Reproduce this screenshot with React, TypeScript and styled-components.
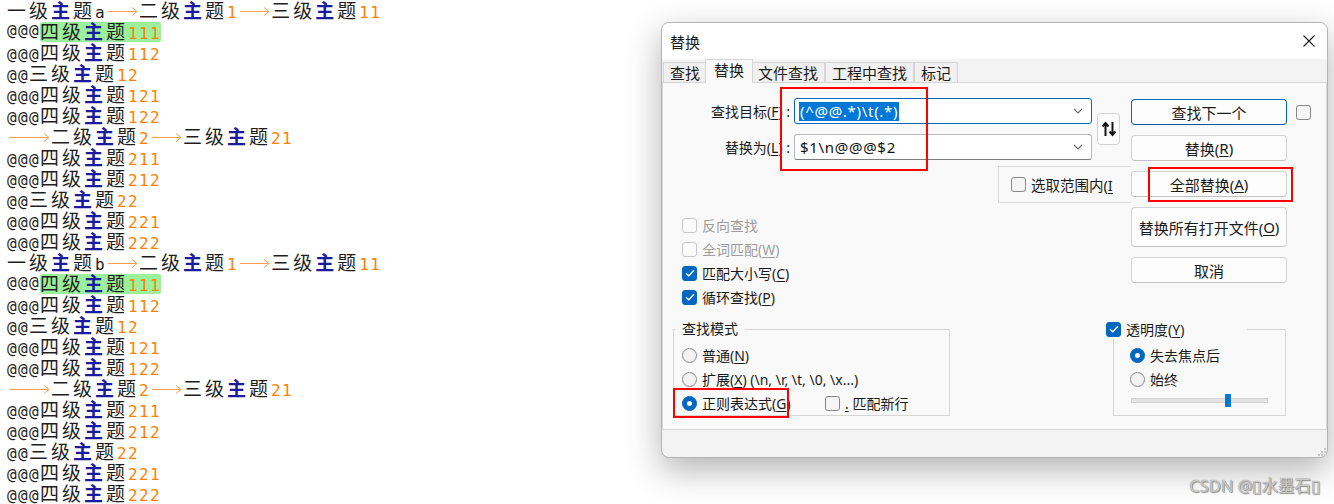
import React from "react";
import styled, { createGlobalStyle } from "styled-components";

const GlobalStyle = createGlobalStyle`
  html, body {
    margin: 0;
    padding: 0;
    background: #ffffff;
  }
  body {
    width: 1334px;
    height: 504px;
    overflow: hidden;
  }
`;

const UI_FONT = `"Noto Sans", "Noto Sans CJK SC", sans-serif`;

const Page = styled.div`
  position: relative;
  width: 1334px;
  height: 504px;
  overflow: hidden;
  background: #ffffff;
`;

/* ---------- editor ---------- */

type Kind = "cjk" | "key" | "num" | "sym";

const Editor = styled.div`
  padding: 0 0 0 7px;
`;

const Line = styled.div`
  height: 21px;
  line-height: 19px;
  white-space: pre;
`;

const Tok = styled.span<{ $kind: Kind }>`
  font-family: ${({ $kind }) =>
    $kind === "cjk" || $kind === "key"
      ? `"Noto Sans CJK SC", sans-serif`
      : `"DejaVu Sans Mono", monospace`};
  font-size: ${({ $kind }) => ($kind === "cjk" || $kind === "key" ? "19px" : "16px")};
  letter-spacing: ${({ $kind }) => ($kind === "cjk" || $kind === "key" ? "3px" : "1.37px")};
  font-weight: ${({ $kind }) => ($kind === "key" ? 700 : 400)};
  color: ${({ $kind }) =>
    $kind === "key" ? "#1b1b9e" : $kind === "num" ? "#ff8000" : "#1e1e1e"};
`;

const Mark = styled.span`
  display: inline-block;
  vertical-align: top;
  height: 20px;
  margin-top: 1px;
  line-height: 18px;
  background: #9cf09c;
  border-radius: 2px;
`;

const Tab = styled.span<{ $cols: number }>`
  display: inline-block;
  vertical-align: top;
  width: ${({ $cols }) => $cols * 11}px;
  height: 21px;
  svg {
    display: block;
  }
`;

const TabArrow = ({ w }: { w: number }) => (
  <svg width={w} height={21} viewBox={`0 0 ${w} 21`}>
    <g stroke="#ff9d4d" strokeWidth="1" fill="none">
      <line x1={2} y1={11.5} x2={w - 2} y2={11.5} shapeRendering="crispEdges" />
      <polyline points={`${w - 7},7.5 ${w - 2},11.5 ${w - 7},15.5`} />
    </g>
  </svg>
);

const kindOf = (ch: string): Kind =>
  ch === "主" ? "key" : /[0-9]/.test(ch) ? "num" : /[\u4e00-\u9fff]/.test(ch) ? "cjk" : "sym";

const renderLine = (src: string) => {
  const out: React.ReactNode[] = [];
  let hl: React.ReactNode[] | null = null;
  let col = 0;
  let buf = "";
  let kind: Kind | null = null;
  let key = 0;
  const target = () => hl ?? out;
  const flush = () => {
    if (buf && kind) target().push(<Tok key={key++} $kind={kind}>{buf}</Tok>);
    buf = "";
    kind = null;
  };
  for (const ch of src) {
    if (ch === "[") {
      flush();
      hl = [];
      continue;
    }
    if (ch === "]") {
      flush();
      out.push(<Mark key={key++}>{hl}</Mark>);
      hl = null;
      continue;
    }
    if (ch === "\t") {
      flush();
      const n = 4 - (col % 4);
      target().push(
        <Tab key={key++} $cols={n}>
          <TabArrow w={n * 11} />
        </Tab>
      );
      col += n;
      continue;
    }
    const k = kindOf(ch);
    if (k !== kind) flush();
    kind = k;
    buf += ch;
    col += k === "cjk" || k === "key" ? 2 : 1;
  }
  flush();
  return out;
};

const BLOCK = [
  "@@@[四级主题111]",
  "@@@四级主题112",
  "@@三级主题12",
  "@@@四级主题121",
  "@@@四级主题122",
  "\t二级主题2\t三级主题21",
  "@@@四级主题211",
  "@@@四级主题212",
  "@@三级主题22",
  "@@@四级主题221",
  "@@@四级主题222",
];

const LINES = [
  "一级主题a\t二级主题1\t三级主题11",
  ...BLOCK,
  "一级主题b\t二级主题1\t三级主题11",
  ...BLOCK,
];

/* ---------- dialog ---------- */

const Dialog = styled.div`
  position: absolute;
  left: 661px;
  top: 22px;
  width: 667px;
  height: 436px;
  box-sizing: border-box;
  border: 1px solid #b4b4b4;
  border-radius: 8px;
  background: #f3f3f3;
  box-shadow: 0 12px 34px rgba(0, 0, 0, 0.3);
  display: flex;
  flex-direction: column;
  overflow: hidden;
  font-family: ${UI_FONT};
  font-size: 14px;
  color: #1a1a1a;
`;

const TitleBar = styled.div`
  height: 36px;
  flex: 0 0 36px;
  background: #ffffff;
  display: flex;
  align-items: center;
  justify-content: space-between;
  padding-left: 8px;
`;

const Title = styled.span`
  font-size: 15px;
`;

const CloseButton = styled.div`
  width: 36px;
  height: 36px;
  display: flex;
  align-items: center;
  justify-content: center;
`;

const TabStrip = styled.div`
  height: 23px;
  flex: 0 0 23px;
  display: flex;
  align-items: flex-end;
  padding-left: 1px;
`;

const TabItem = styled.div<{ $active?: boolean }>`
  position: relative;
  box-sizing: border-box;
  height: ${({ $active }) => ($active ? "24px" : "21px")};
  padding: 0 ${({ $active }) => ($active ? "8px" : "6px")};
  margin: 0 ${({ $active }) => ($active ? "-2px" : "0")} -1px 0;
  margin-left: ${({ $active }) => ($active ? "-2px" : "0")};
  border: 1px solid #d6d6d6;
  border-bottom: ${({ $active }) => ($active ? "none" : "1px solid #d6d6d6")};
  background: ${({ $active }) => ($active ? "#f9f9f9" : "#f0f0f0")};
  font-size: 15px;
  line-height: 20px;
  z-index: ${({ $active }) => ($active ? 2 : 1)};
  & + & {
    border-left: ${({ $active }) => ($active ? "1px solid #d6d6d6" : "none")};
  }
`;

const Panel = styled.div`
  flex: 1;
  box-sizing: border-box;
  border: 1px solid #d9d9d9;
  background: #f9f9f9;
  padding-top: 15px;
  display: flex;
  flex-direction: column;
`;

const Footer = styled.div`
  position: relative;
  flex: 0 0 27px;
`;

const Grip = styled.svg`
  position: absolute;
  right: 1px;
  bottom: 1px;
`;

const TopSection = styled.div`
  display: flex;
`;

const LeftCol = styled.div`
  width: 468px;
  display: flex;
  flex-direction: column;
`;

const Fields = styled.div`
  display: flex;
  align-items: center;
`;

const FieldRows = styled.div`
  display: flex;
  flex-direction: column;
  gap: 10px;
`;

const FieldRow = styled.div`
  display: flex;
  align-items: center;
  height: 26px;
`;

const FieldLabel = styled.label`
  width: 131px;
  box-sizing: border-box;
  padding-right: 4px;
  text-align: right;
  white-space: nowrap;
`;

const Combo = styled.div<{ $focused?: boolean }>`
  width: 298px;
  height: 26px;
  box-sizing: border-box;
  border: 1px solid ${({ $focused }) => ($focused ? "#0067c0" : "#b8b8b8")};
  border-bottom-color: ${({ $focused }) => ($focused ? "#0067c0" : "#7c7c7c")};
  border-radius: 3px;
  background: #ffffff;
  display: flex;
  align-items: center;
  justify-content: space-between;
  padding: 0 8px 0 4px;
  font-family: "Noto Sans", sans-serif;
  font-size: 15px;
  letter-spacing: 0.7px;
`;

const ComboText = styled.span<{ $selected?: boolean }>`
  line-height: 19px;
  padding: 0 1px;
  background: ${({ $selected }) => ($selected ? "#0078d7" : "transparent")};
  color: ${({ $selected }) => ($selected ? "#ffffff" : "#111111")};
`;

const SwapButton = styled.div`
  margin-left: 5px;
  width: 23px;
  height: 32px;
  box-sizing: border-box;
  border: 1px solid #d2d2d2;
  border-radius: 4px;
  background: #fdfdfd;
  display: flex;
  align-items: center;
  justify-content: center;
`;

const RangeGroup = styled.div`
  align-self: flex-end;
  width: 133px;
  height: 37px;
  margin-top: 6px;
  box-sizing: border-box;
  border: 1px solid #dadada;
  border-right: none;
  padding-left: 12px;
  display: flex;
  align-items: center;
  gap: 5px;
  white-space: nowrap;
`;

const ClippedLabel = styled.span`
  width: 82px;
  overflow: hidden;
  font-size: 14.5px;
`;

const CheckList = styled.div`
  margin-top: 10px;
  padding-left: 19px;
  display: flex;
  flex-direction: column;
`;

const OptionRow = styled.div<{ $disabled?: boolean }>`
  height: 24px;
  display: flex;
  align-items: center;
  gap: 5px;
  white-space: nowrap;
  color: ${({ $disabled }) => ($disabled ? "#9e9e9e" : "#1a1a1a")};
`;

const ButtonCol = styled.div`
  width: 156px;
  margin-top: 1px;
  display: flex;
  flex-direction: column;
  gap: 10px;
`;

const Button = styled.div<{ $primary?: boolean; $tall?: boolean }>`
  height: ${({ $tall }) => ($tall ? "40px" : "26px")};
  box-sizing: border-box;
  border: 1px solid ${({ $primary }) => ($primary ? "#0067c0" : "#d3d3d3")};
  border-bottom-color: ${({ $primary }) => ($primary ? "#0058a8" : "#c2c2c2")};
  border-radius: 4px;
  background: #fdfdfd;
  display: flex;
  align-items: center;
  justify-content: center;
  font-size: 15px;
  white-space: nowrap;
`;

const SideCheck = styled.div`
  margin: 7px 0 0 9px;
`;

const BottomSection = styled.div`
  display: flex;
  margin-top: 10px;
`;

const Group = styled.fieldset<{ $offset: number; $width: number; $pad: number }>`
  margin: 0 0 0 ${({ $offset }) => $offset}px;
  width: ${({ $width }) => $width}px;
  box-sizing: border-box;
  min-width: 0;
  border: 1px solid #d6d6d6;
  padding: 4px 0 0 ${({ $pad }) => $pad}px;
`;

const Legend = styled.legend<{ $shift: number }>`
  margin-left: ${({ $shift }) => $shift}px;
  padding: 0 7px;
  height: 20px;
  line-height: 20px;
`;

const CheckLegend = styled.legend<{ $shift: number }>`
  margin-left: ${({ $shift }) => $shift}px;
  padding: 0;
  width: 141px;
  height: 20px;
  display: flex;
  align-items: center;
  gap: 5px;
`;

const RegexRow = styled.div`
  display: flex;
  align-items: center;
  & > :first-child {
    width: 143px;
  }
`;

const SliderRow = styled.div`
  height: 18px;
  display: flex;
  align-items: center;
  padding-bottom: 6px;
`;

const Track = styled.div`
  position: relative;
  width: 137px;
  height: 5px;
  box-sizing: border-box;
  margin-left: 1px;
  border: 1px solid #d2d2d2;
  background: #e4e4e4;
`;

const Thumb = styled.div<{ $pos: number }>`
  position: absolute;
  left: ${({ $pos }) => $pos}px;
  top: -5px;
  width: 6px;
  height: 13px;
  background: #0078d4;
  border-radius: 1px;
`;

const Box = styled.span<{ $checked?: boolean; $disabled?: boolean }>`
  flex: 0 0 15px;
  width: 15px;
  height: 15px;
  box-sizing: border-box;
  border-radius: 3px;
  border: 1px solid
    ${({ $checked, $disabled }) => ($checked ? "#0067c0" : $disabled ? "#c8c8c8" : "#878787")};
  background: ${({ $checked, $disabled }) =>
    $checked ? "#0067c0" : $disabled ? "#fbfbfb" : "#f6f6f6"};
  display: flex;
  align-items: center;
  justify-content: center;
`;

const Radio = styled.span<{ $checked?: boolean }>`
  flex: 0 0 15px;
  width: 15px;
  height: 15px;
  box-sizing: border-box;
  border-radius: 50%;
  border: 1px solid ${({ $checked }) => ($checked ? "#0067c0" : "#878787")};
  background: ${({ $checked }) => ($checked ? "#0067c0" : "#f4f4f4")};
  display: flex;
  align-items: center;
  justify-content: center;
  &::after {
    content: "";
    display: ${({ $checked }) => ($checked ? "block" : "none")};
    width: 5px;
    height: 5px;
    border-radius: 50%;
    background: #ffffff;
  }
`;

const U = styled.u`
  text-underline-offset: 2px;
`;

const Callout = styled.div<{ $x: number; $y: number; $w: number; $h: number }>`
  position: absolute;
  left: ${({ $x }) => $x}px;
  top: ${({ $y }) => $y}px;
  width: ${({ $w }) => $w}px;
  height: ${({ $h }) => $h}px;
  box-sizing: border-box;
  border: 2px solid #ff0000;
  pointer-events: none;
  z-index: 5;
`;

const Watermark = styled.div`
  position: absolute;
  right: 14px;
  bottom: 7px;
  font-family: ${UI_FONT};
  font-size: 16.5px;
  color: #c9c9c9;
  text-shadow: 0 0 1px #7d7d7d, 1px 1px 1px #8e8e8e;
`;

const Check = ({ checked, disabled }: { checked?: boolean; disabled?: boolean }) => (
  <Box $checked={checked} $disabled={disabled}>
    {checked && (
      <svg width="10" height="8" viewBox="0 0 10 8">
        <polyline points="1,4.2 3.8,6.8 9,1.2" fill="none" stroke="#fff" strokeWidth="1.3" />
      </svg>
    )}
  </Box>
);

const Chevron = () => (
  <svg width="10" height="6" viewBox="0 0 10 6">
    <polyline points="1,1 5,5 9,1" fill="none" stroke="#6a6a6a" strokeWidth="1.1" />
  </svg>
);

const App = () => (
  <Page>
    <GlobalStyle />
    <Editor>
      {LINES.map((l, i) => (
        <Line key={i}>{renderLine(l)}</Line>
      ))}
    </Editor>

    <Dialog>
      <TitleBar>
        <Title>替换</Title>
        <CloseButton>
          <svg width="12" height="12" viewBox="0 0 12 12">
            <path d="M0.5 0.5L11.5 11.5M11.5 0.5L0.5 11.5" stroke="#1a1a1a" strokeWidth="1.1" />
          </svg>
        </CloseButton>
      </TitleBar>

      <TabStrip>
        <TabItem>查找</TabItem>
        <TabItem $active>替换</TabItem>
        <TabItem>文件查找</TabItem>
        <TabItem>工程中查找</TabItem>
        <TabItem>标记</TabItem>
      </TabStrip>

      <Panel>
        <TopSection>
          <LeftCol>
            <Fields>
              <FieldRows>
                <FieldRow>
                  <FieldLabel>
                    查找目标(<U>F</U>) :
                  </FieldLabel>
                  <Combo $focused>
                    <ComboText $selected>(^@@.*)\t(.*)</ComboText>
                    <Chevron />
                  </Combo>
                </FieldRow>
                <FieldRow>
                  <FieldLabel>
                    替换为(<U>L</U>) :
                  </FieldLabel>
                  <Combo>
                    <ComboText>$1\n@@@$2</ComboText>
                    <Chevron />
                  </Combo>
                </FieldRow>
              </FieldRows>
              <SwapButton>
                <svg width="16" height="18" viewBox="0 0 16 18">
                  <g stroke="#111" strokeWidth="2" fill="none">
                    <path d="M4.5 16V3M1.5 6.5L4.5 3L7.5 6.5" />
                    <path d="M11.5 2V15M8.5 11.5L11.5 15L14.5 11.5" />
                  </g>
                </svg>
              </SwapButton>
            </Fields>

            <RangeGroup>
              <Check />
              <ClippedLabel>
                选取范围内(<U>I</U>)
              </ClippedLabel>
            </RangeGroup>

            <CheckList>
              <OptionRow $disabled>
                <Check disabled />
                反向查找
              </OptionRow>
              <OptionRow $disabled>
                <Check disabled />
                <span>
                  全词匹配(<U>W</U>)
                </span>
              </OptionRow>
              <OptionRow>
                <Check checked />
                <span>
                  匹配大小写(<U>C</U>)
                </span>
              </OptionRow>
              <OptionRow>
                <Check checked />
                <span>
                  循环查找(<U>P</U>)
                </span>
              </OptionRow>
            </CheckList>
          </LeftCol>

          <ButtonCol>
            <Button $primary>查找下一个</Button>
            <Button>
              替换(<U>R</U>)
            </Button>
            <Button>
              全部替换(<U>A</U>)
            </Button>
            <Button $tall>
              替换所有打开文件(<U>O</U>)
            </Button>
            <Button>取消</Button>
          </ButtonCol>

          <SideCheck>
            <Check />
          </SideCheck>
        </TopSection>

        <BottomSection>
          <Group $offset={10} $width={277} $pad={8}>
            <Legend $shift={-7}>查找模式</Legend>
            <OptionRow>
              <Radio />
              <span>
                普通(<U>N</U>)
              </span>
            </OptionRow>
            <OptionRow>
              <Radio />
              <span>
                扩展(<U>X</U>) (\n, \r, \t, \0, \x...)
              </span>
            </OptionRow>
            <RegexRow>
              <OptionRow>
                <Radio $checked />
                <span>
                  正则表达式(<U>G</U>)
                </span>
              </OptionRow>
              <OptionRow>
                <Check />
                <span>
                  <U>.</U> 匹配新行
                </span>
              </OptionRow>
            </RegexRow>
          </Group>

          <Group $offset={163} $width={173} $pad={16}>
            <CheckLegend $shift={-24}>
              <Check checked />
              <span>
                透明度(<U>Y</U>)
              </span>
            </CheckLegend>
            <OptionRow>
              <Radio $checked />
              失去焦点后
            </OptionRow>
            <OptionRow>
              <Radio />
              始终
            </OptionRow>
            <SliderRow>
              <Track>
                <Thumb $pos={93} />
              </Track>
            </SliderRow>
          </Group>
        </BottomSection>
      </Panel>

      <Footer>
        <Grip width="10" height="10" viewBox="0 0 10 10">
          <g fill="#c4c4c4">
            <rect x="8" y="2" width="2" height="2" />
            <rect x="5" y="5" width="2" height="2" />
            <rect x="8" y="5" width="2" height="2" />
            <rect x="2" y="8" width="2" height="2" />
            <rect x="5" y="8" width="2" height="2" />
            <rect x="8" y="8" width="2" height="2" />
          </g>
        </Grip>
      </Footer>

      <Callout $x={118} $y={64} $w={148} $h={84} />
      <Callout $x={486} $y={144} $w={145} $h={35} />
      <Callout $x={11} $y={365} $w={116} $h={30} />
    </Dialog>

    <Watermark>CSDN @▯水墨石▯</Watermark>
  </Page>
);

export default App;
